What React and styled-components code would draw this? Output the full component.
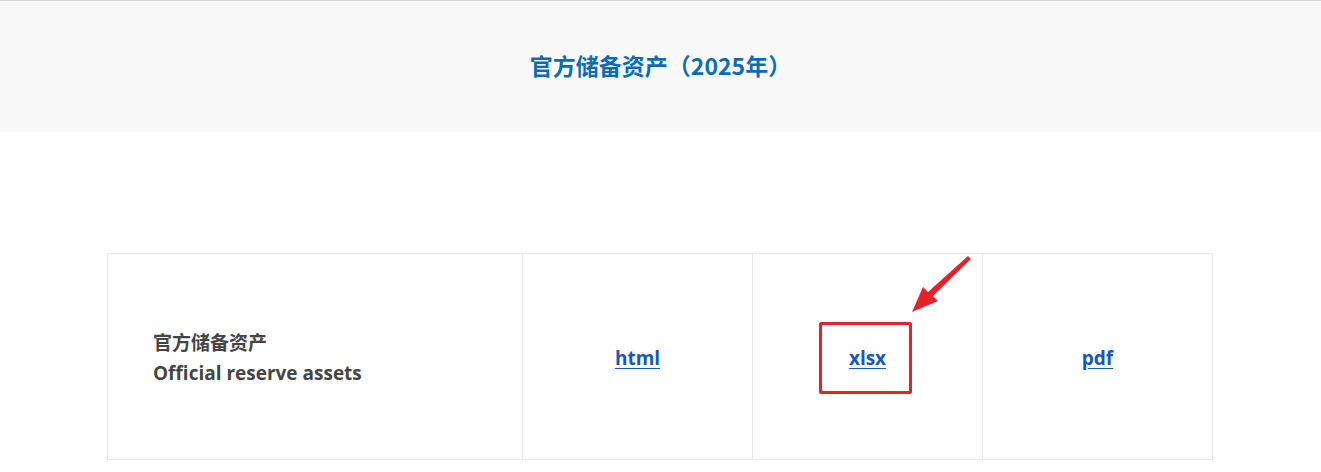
import React from 'react';
import styled, { createGlobalStyle } from 'styled-components';

const GlobalStyle = createGlobalStyle`
  html, body {
    margin: 0;
    padding: 0;
    background: #fff;
    font-family: "Open Sans", "Noto Sans CJK SC", sans-serif;
  }
`;

const Page = styled.div`
  width: 1321px;
  height: 472px;
  overflow: hidden;
  border-top: 1px solid #d3d8dd;
  box-sizing: border-box;
`;

const Banner = styled.header`
  height: 131px;
  padding-bottom: 4px;
  box-sizing: border-box;
  background: #f9f9f9;
  display: flex;
  align-items: center;
  justify-content: center;
`;

const Title = styled.h1`
  margin: 0;
  font-family: "Noto Sans CJK SC", sans-serif;
  font-size: 23px;
  font-weight: 700;
  color: #0c6db6;
  letter-spacing: 0;
`;

const Table = styled.div`
  margin: 121px 0 0 107px;
  width: 1106px;
  display: grid;
  grid-template-columns: 414px 230px 230px 230px;
  border: 1px solid #e8e8e8;
  box-sizing: border-box;
`;

const Cell = styled.div`
  position: relative;
  height: 205px;
  display: flex;
  align-items: center;
  justify-content: ${(p) => (p.$left ? 'flex-start' : 'center')};
  padding-left: ${(p) => (p.$left ? '45px' : '0')};
  border-left: ${(p) => (p.$first ? 'none' : '1px solid #e8e8e8')};
  box-sizing: border-box;
`;

const Label = styled.div`
  font-family: "Open Sans", "Noto Sans CJK SC", sans-serif;
  font-size: 19px;
  font-weight: 700;
  line-height: 30px;
  color: #454545;
  padding-top: 2px;
`;

const FileLink = styled.a`
  font-family: "Open Sans", sans-serif;
  font-size: 19px;
  font-weight: 700;
  color: #1658bd;
  text-decoration: underline;
  text-underline-offset: 3px;
  cursor: pointer;
`;

const Highlight = styled.span`
  position: relative;
  display: inline-block;
  margin-top: 2px;
  &::before {
    content: '';
    position: absolute;
    left: -30px;
    right: -26px;
    top: -23px;
    bottom: -23px;
    border: 3px solid #e5212b;
    border-radius: 2px;
  }
`;

const Arrow = styled.svg`
  position: absolute;
  left: 155px;
  top: 0;
  width: 65px;
  height: 62px;
`;

const links = ['html', 'xlsx', 'pdf'];

export default function App() {
  return (
    <Page>
      <GlobalStyle />
      <Banner>
        <Title>官方储备资产（2025年）</Title>
      </Banner>
      <Table>
        <Cell $left $first>
          <Label>
            官方储备资产
            <br />
            Official reserve assets
          </Label>
        </Cell>
        {links.map((name) => (
          <Cell key={name}>
            {name === 'xlsx' ? (
              <>
                <Highlight>
                  <FileLink>{name}</FileLink>
                </Highlight>
                <Arrow viewBox="0 0 65 62">
                  <polygon points="60,2 63,5 25,42 30,47 4,58 15,33 20,38" fill="#e5212b" />
                </Arrow>
              </>
            ) : (
              <FileLink style={{ marginTop: 2 }}>{name}</FileLink>
            )}
          </Cell>
        ))}
      </Table>
    </Page>
  );
}
